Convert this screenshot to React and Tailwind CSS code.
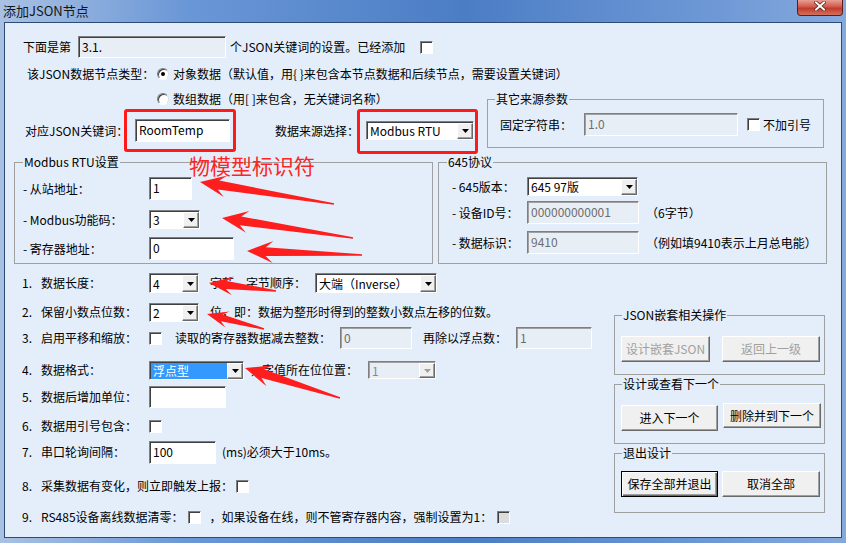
import clsx from 'clsx'

function Edit({ className = '', value = '', disabled = false, readOnly = false }) {
  return (
    <div
      className={clsx(
        'border border-t-[#7f7f7f] border-l-[#7f7f7f] border-b-white border-r-white px-[3px] pt-[2px] leading-[15px] overflow-hidden whitespace-nowrap',
        disabled
          ? 'bg-[#e8eef6] text-[#6d6d6d] shadow-[inset_1px_1px_0_#a0a0a0]'
          : readOnly
            ? 'bg-[#e8eef6] shadow-[inset_1px_1px_0_#404040]'
            : 'bg-white shadow-[inset_1px_1px_0_#404040]',
        className
      )}
    >
      {value}
    </div>
  )
}

function Combo({ className = '', value = '', selected = false, disabled = false }) {
  return (
    <div
      className={clsx(
        'flex border border-t-[#7f7f7f] border-l-[#7f7f7f] border-b-white border-r-white pt-[1px] pl-[1px]',
        disabled ? 'bg-[#e8eef6] shadow-[inset_1px_1px_0_#a0a0a0]' : 'bg-white shadow-[inset_1px_1px_0_#404040]',
        className
      )}
    >
      <div
        className={clsx(
          'flex-1 flex items-center pl-[2px] whitespace-nowrap overflow-hidden',
          selected && 'bg-[#3399ff] text-white',
          disabled && 'text-[#8a8a8a]'
        )}
      >
        {value}
      </div>
      <div className="w-[16px] h-full bg-[#f0f0f0] border border-t-white border-l-white border-b-[#696969] border-r-[#696969] shadow-[inset_-1px_-1px_0_#a0a0a0] flex items-center justify-center">
        <svg width="7" height="4" viewBox="0 0 7 4">
          <path d="M0 0h7L3.5 4z" fill={disabled ? '#a0a0a0' : '#000'} />
        </svg>
      </div>
    </div>
  )
}

function Check({ className = '', disabled = false }) {
  return (
    <div
      className={clsx(
        'w-[13px] h-[13px] shrink-0 border border-t-[#7f7f7f] border-l-[#7f7f7f] border-b-white border-r-white shadow-[inset_1px_1px_0_#404040]',
        disabled ? 'bg-[#dcdcdc]' : 'bg-white',
        className
      )}
    />
  )
}

function Radio({ checked = false }) {
  return (
    <div className="w-[12px] h-[12px] shrink-0 rounded-full border border-t-[#7f7f7f] border-l-[#7f7f7f] border-b-white border-r-[#e0e0e0] bg-white shadow-[inset_1px_1px_0_#404040] flex items-center justify-center">
      {checked && <div className="w-[4px] h-[4px] rounded-full bg-black" />}
    </div>
  )
}

function Btn({ className = '', children, disabled = false, def = false }) {
  return (
    <div
      className={clsx(
        'flex items-center justify-center bg-[#f0f0f0] border whitespace-nowrap',
        def
          ? 'border-black shadow-[inset_1px_1px_0_#fff,inset_-1px_-1px_0_#696969,inset_-2px_-2px_0_#a0a0a0]'
          : 'border-t-white border-l-white border-b-[#696969] border-r-[#696969] shadow-[inset_-1px_-1px_0_#a0a0a0]',
        disabled && 'text-[#a0a0a0]',
        className
      )}
    >
      {children}
    </div>
  )
}

function Num({ n }) {
  return <span className="w-[19px] shrink-0">{n}</span>
}

function arrowPoints(tip, tail) {
  const [tx, ty] = tip
  const dx = tail[0] - tx
  const dy = tail[1] - ty
  const len = Math.hypot(dx, dy)
  const ux = dx / len
  const uy = dy / len
  const nx = -uy
  const ny = ux
  const L = Math.min(26, len * 0.36)
  const W = Math.min(11, len * 0.14)
  const N = L * 0.72
  const w = Math.min(4.5, len * 0.06)
  const p = (a, b) => `${(tx + ux * a + nx * b).toFixed(1)},${(ty + uy * a + ny * b).toFixed(1)}`
  return [p(0, 0), p(L, W), p(N, w), p(len, 0.8), p(len, -0.8), p(N, -w), p(L, -W)].join(' ')
}

const arrows = [
  [[200, 182], [334, 204]],
  [[222, 218], [353, 238]],
  [[247, 251], [362, 255]],
  [[209, 283], [276, 291]],
  [[207, 314], [264, 329]],
  [[245, 368], [340, 398]],
]

export default function App() {
  return (
    <div className="relative w-[846px] h-[543px] overflow-hidden bg-[linear-gradient(90deg,#a9c1e3_0%,#6a97d6_22%,#4b7dc5_55%,#6f99d6_85%,#86a9dd_100%)] font-['Noto_Sans_CJK_SC',sans-serif] text-[12px] leading-[16px] text-black">
      {/* title bar */}
      <div className="h-[22px] flex justify-between">
        <div className="pl-[3px] pt-[2px] text-[13px] leading-[17px] text-[#151515]">添加JSON节点</div>
        <div className="mr-[3px] w-[46px] h-[16px] rounded-b-[4px] border border-t-0 border-[#5a1f1a] bg-[linear-gradient(180deg,#e8a093_0%,#d1584a_45%,#c23a2c_55%,#d4705e_100%)] flex justify-center">
          <svg width="12" height="10" viewBox="0 0 12 10" className="mt-[1px]">
            <path d="M2 1.5l8 7M10 1.5l-8 7" stroke="#4a1a16" strokeWidth="3.4" strokeLinecap="square" />
            <path d="M2 1.5l8 7M10 1.5l-8 7" stroke="#fff" strokeWidth="2" strokeLinecap="square" />
          </svg>
        </div>
      </div>

      {/* client area */}
      <div className="mx-[4px] h-[516px] border border-[#2c4c77] bg-[#e4eefb]">
        <div className="pt-[13px]">
          <div className="flex items-center h-[22px] pl-[18px]">
            <span className="w-[55px]">下面是第</span>
            <Edit className="w-[148px] h-[22px]" value="3.1." readOnly />
            <span className="ml-[4px] w-[190px] whitespace-nowrap">个JSON关键词的设置。已经添加</span>
            <Check />
          </div>

          <div className="mt-[8px] flex items-center h-[16px] pl-[22px]">
            <span className="w-[130px] whitespace-nowrap">该JSON数据节点类型：</span>
            <Radio checked />
            <span className="ml-[4px] whitespace-nowrap">对象数据（默认值，用{'{ }'}来包含本节点数据和后续节点，需要设置关键词）</span>
          </div>

          <div className="mt-[9px] flex">
            <div className="w-[482px]">
              <div className="flex items-center h-[16px] pl-[152px]">
                <Radio />
                <span className="ml-[4px] whitespace-nowrap">数组数据（用[ ]来包含，无关键词名称）</span>
              </div>
              <div className="mt-[12px] flex items-center h-[23px] pl-[20px]">
                <span className="w-[110px] whitespace-nowrap">对应JSON关键词：</span>
                <Edit className="w-[95px] h-[23px]" value="RoomTemp" />
                <span className="ml-[45px] w-[91px] whitespace-nowrap">数据来源选择：</span>
                <Combo className="w-[108px] h-[19px]" value="Modbus RTU" />
              </div>
            </div>
            <fieldset className="w-[337px] h-[57px] border border-[#a0a0a0]">
              <legend className="ml-[7px] px-[1px] leading-[16px]">其它来源参数</legend>
              <div className="mt-[6px] flex items-center h-[23px] pl-[12px]">
                <span className="w-[84px]">固定字符串：</span>
                <Edit className="w-[154px] h-[23px]" value="1.0" disabled />
                <Check className="ml-[9px]" />
                <span className="ml-[3px] whitespace-nowrap">不加引号</span>
              </div>
            </fieldset>
          </div>

          <div className="mt-[6px] flex">
            <fieldset className="ml-[9px] w-[419px] h-[110px] border border-[#a0a0a0]">
              <legend className="ml-[8px] px-[1px] leading-[16px]">Modbus RTU设置</legend>
              <div className="mt-[7px] flex items-center h-[23px] pl-[8px]">
                <span className="w-[126px]">- 从站地址：</span>
                <Edit className="w-[43px] h-[23px]" value="1" />
              </div>
              <div className="mt-[10px] flex items-center h-[19px] pl-[8px]">
                <span className="w-[126px]">- Modbus功能码：</span>
                <Combo className="w-[51px] h-[19px]" value="3" />
              </div>
              <div className="mt-[8px] flex items-center h-[23px] pl-[8px]">
                <span className="w-[126px]">- 寄存器地址：</span>
                <Edit className="w-[85px] h-[23px]" value="0" />
              </div>
            </fieldset>
            <fieldset className="ml-[5px] w-[389px] h-[110px] border border-[#a0a0a0]">
              <legend className="ml-[8px] px-[1px] leading-[16px]">645协议</legend>
              <div className="mt-[7px] flex items-center h-[19px] pl-[13px]">
                <span className="w-[75px]">- 645版本：</span>
                <Combo className="w-[111px] h-[19px]" value="645 97版" />
              </div>
              <div className="mt-[5px] flex items-center h-[23px] pl-[13px]">
                <span className="w-[75px]">- 设备ID号：</span>
                <Edit className="w-[112px] h-[23px]" value="000000000001" disabled />
                <span className="ml-[7px]">（6字节）</span>
              </div>
              <div className="mt-[7px] flex items-center h-[23px] pl-[13px]">
                <span className="w-[75px]">- 数据标识：</span>
                <Edit className="w-[112px] h-[23px]" value="9410" disabled />
                <span className="ml-[7px] whitespace-nowrap">（例如填9410表示上月总电能）</span>
              </div>
            </fieldset>
          </div>

          <div className="mt-[7px] flex">
            <div className="w-[609px] pl-[17px]">
              <div className="flex items-center h-[24px]">
                <Num n="1." />
                <span className="w-[108px]">数据长度：</span>
                <Combo className="w-[50px] h-[20px]" value="4" />
                <span className="ml-[11px] w-[105px] whitespace-nowrap">字节，字节顺序：</span>
                <Combo className="w-[122px] h-[20px]" value="大端（Inverse）" />
              </div>
              <div className="mt-[5px] flex items-center h-[24px]">
                <Num n="2." />
                <span className="w-[108px]">保留小数点位数：</span>
                <Combo className="w-[50px] h-[19px]" value="2" />
                <span className="ml-[11px] whitespace-nowrap">位，即：数据为整形时得到的整数小数点左移的位数。</span>
              </div>
              <div className="mt-[2px] flex items-center h-[24px]">
                <Num n="3." />
                <span className="w-[108px]">启用平移和缩放：</span>
                <Check />
                <span className="ml-[13px] w-[165px] whitespace-nowrap">读取的寄存器数据减去整数：</span>
                <Edit className="w-[72px] h-[22px]" value="0" disabled />
                <span className="ml-[11px] w-[93px] whitespace-nowrap">再除以浮点数：</span>
                <Edit className="w-[76px] h-[22px]" value="1" disabled />
              </div>
              <div className="mt-[8px] flex items-center h-[24px]">
                <Num n="4." />
                <span className="w-[108px]">数据格式：</span>
                <Combo className="w-[95px] h-[19px]" value="浮点型" selected />
                <span className="ml-[6px] w-[118px] whitespace-nowrap">，字值所在位位置：</span>
                <Combo className="w-[68px] h-[18px]" value="1" disabled />
              </div>
              <div className="mt-[3px] flex items-center h-[24px]">
                <Num n="5." />
                <span className="w-[108px]">数据后增加单位：</span>
                <Edit className="w-[77px] h-[22px]" />
              </div>
              <div className="mt-[5px] flex items-center h-[24px]">
                <Num n="6." />
                <span className="w-[108px]">数据用引号包含：</span>
                <Check />
              </div>
              <div className="mt-[2px] flex items-center h-[24px]">
                <Num n="7." />
                <span className="w-[108px]">串口轮询间隔：</span>
                <Edit className="w-[67px] h-[23px]" value="100" />
                <span className="ml-[6px] whitespace-nowrap">(ms)必须大于10ms。</span>
              </div>
              <div className="mt-[10px] flex items-center h-[24px]">
                <Num n="8." />
                <span className="whitespace-nowrap">采集数据有变化，则立即触发上报：</span>
                <Check className="ml-[3px]" />
              </div>
              <div className="mt-[7px] flex items-center h-[24px]">
                <Num n="9." />
                <span className="whitespace-nowrap">RS485设备离线数据清零：</span>
                <Check className="ml-[4px]" />
                <span className="ml-[9px] whitespace-nowrap">，如果设备在线，则不管寄存器内容，强制设置为1：</span>
                <Check className="ml-[5px]" disabled />
              </div>
            </div>

            <div className="w-[211px] pt-[36px]">
              <fieldset className="h-[68px] border border-[#a0a0a0]">
                <legend className="ml-[7px] px-[1px] leading-[16px]">JSON嵌套相关操作</legend>
                <div className="mt-[13px] flex pl-[6px]">
                  <Btn className="w-[89px] h-[26px]" disabled>设计嵌套JSON</Btn>
                  <Btn className="ml-[12px] w-[98px] h-[26px]" disabled>返回上一级</Btn>
                </div>
              </fieldset>
              <fieldset className="mt-[1px] h-[68px] border border-[#a0a0a0]">
                <legend className="ml-[7px] px-[1px] leading-[16px]">设计或查看下一个</legend>
                <div className="flex items-start pl-[6px]">
                  <Btn className="mt-[13px] w-[97px] h-[26px]">进入下一个</Btn>
                  <Btn className="mt-[11px] ml-[5px] w-[98px] h-[25px]">删除并到下一个</Btn>
                </div>
              </fieldset>
              <fieldset className="mt-[1px] h-[68px] border border-[#a0a0a0]">
                <legend className="ml-[7px] px-[1px] leading-[16px]">退出设计</legend>
                <div className="mt-[10px] flex pl-[6px]">
                  <Btn className="w-[97px] h-[26px]" def>保存全部并退出</Btn>
                  <Btn className="ml-[4px] w-[98px] h-[26px]">取消全部</Btn>
                </div>
              </fieldset>
            </div>
          </div>
        </div>
      </div>

      {/* annotations */}
      <div className="absolute left-[124px] top-[109px] w-[112px] h-[43px] border-[3px] border-[#ff1a1a] rounded-[3px] pointer-events-none" />
      <div className="absolute left-[357px] top-[109px] w-[121px] h-[45px] border-[3px] border-[#ff1a1a] rounded-[3px] pointer-events-none" />
      <div className="absolute left-[189px] top-[153px] text-[21px] leading-[24px] text-[#ff2424] whitespace-nowrap pointer-events-none">物模型标识符</div>
      <svg className="absolute left-0 top-0 pointer-events-none" width="846" height="543">
        {arrows.map(([tip, tail], i) => (
          <polygon key={i} points={arrowPoints(tip, tail)} fill="#ff1e1e" />
        ))}
      </svg>
    </div>
  )
}
